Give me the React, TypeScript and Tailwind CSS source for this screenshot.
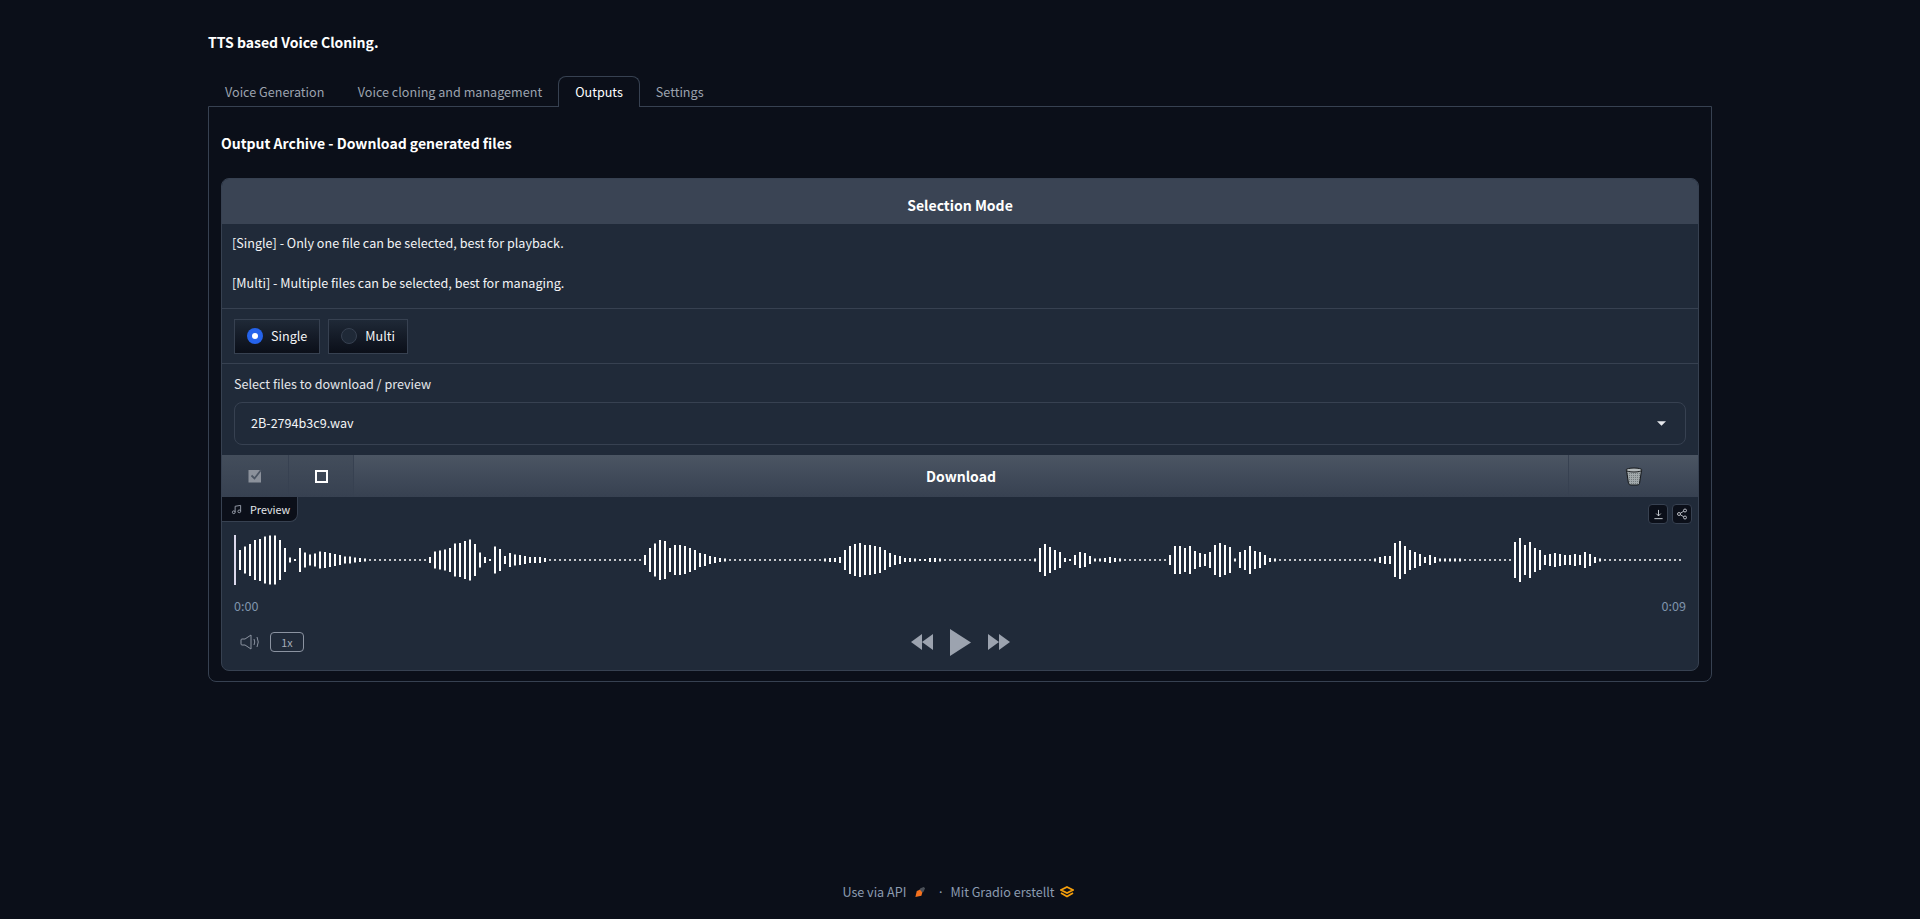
const dots = (n: number) => Array(n).fill(1.5)

// bar heights for the waveform, one bar every 5px
const bars = [
  20, 27, 32, 40, 42, 47, 49, 49, 40, 24, 5, 2, 24, 15, 11, 13, 17, 16, 14, 12, 10, 7, 7, 5, 4, 3,
  ...dots(12),
  6, 17, 19, 21, 24, 33, 34, 38, 41, 32, 15, 6, 2, 27, 22, 8, 14, 11, 10, 8, 6, 6, 6, 4,
  ...dots(19),
  10, 24, 33, 40, 38, 24, 30, 30, 28, 24, 20, 14, 12, 8, 6, 4, 3,
  ...dots(19),
  3, 4, 4, 6, 20, 28, 32, 34, 30, 30, 28, 26, 20, 14, 10, 8, 4, 4, 3, 2, 2, 4, 4, 3,
  ...dots(18),
  3, 24, 32, 26, 20, 16, 4, 2, 10, 16, 14, 8, 3, 3, 4, 6, 4, 3,
  ...dots(9),
  10, 28, 28, 24, 28, 18,
  14, 12, 16, 30, 34, 30, 26, 3, 16, 20, 28, 18, 16, 10, 4, 3,
  ...dots(19),
  3, 6, 8, 8, 34, 38, 28, 20, 16, 12, 6, 10, 6, 3, 3, 3, 3, 3,
  ...dots(10),
  36, 44, 30, 36, 24, 20, 10, 12, 14, 12, 10, 10, 12, 10, 16, 12, 6, 3,
  ...dots(16),
]

function Waveform() {
  return (
    <svg className="block" width="1452" height="56" viewBox="0 0 1452 56">
      <rect x="0" y="3" width="2" height="50" fill="#dcd9ec" />
      {bars.map((h, i) => (
        <rect key={i} x={5 + i * 5} y={28 - h / 2} width="2" height={h} fill="#ffffff" />
      ))}
    </svg>
  )
}

function Radio({ label, checked }: { label: string; checked?: boolean }) {
  return (
    <label className="flex h-[35px] items-center border border-[#374151] bg-gradient-to-b from-[#1f2937] to-[#0b0f19] pl-3 pr-[12px] text-[12.6px] text-[#f3f4f6]">
      {checked ? (
        <span className="flex h-4 w-4 items-center justify-center rounded-full bg-[#2563eb]">
          <span className="h-[6px] w-[6px] rounded-full bg-white" />
        </span>
      ) : (
        <span className="h-4 w-4 rounded-full border border-[#374151] bg-[#1f2937]" />
      )}
      <span className="ml-2">{label}</span>
    </label>
  )
}

function SmallIcon({ children }: { children: React.ReactNode }) {
  return (
    <button className="flex h-5 w-5 items-center justify-center rounded border border-[#374151] bg-[#0b0f19] text-[#d1d5db]">
      {children}
    </button>
  )
}

export default function App() {
  return (
    <div
      className="flex min-h-screen flex-col bg-[#0b0f19] text-[#f3f4f6]"
      style={{ fontFamily: '"Noto Sans CJK JP", "Open Sans", sans-serif' }}
    >
      <div className="mx-auto w-[1504px]">
        <h1 className="mt-[31px] h-[22px] text-[14px] font-semibold leading-[22px] text-white">TTS based Voice Cloning.</h1>

        {/* Tabs */}
        <div className="mt-[24px] flex h-[30px] items-end pl-[2px] text-[12.6px] text-[#9ca3af]">
          <button className="h-[30px] pl-[15px] pr-[17px]">Voice Generation</button>
          <button className="h-[30px] pl-[16.5px] pr-[16px]">Voice cloning and management</button>
          <button className="relative z-10 h-[31px] rounded-t-lg border border-b-0 border-[#374151] bg-[#0b0f19] px-[16px] text-white">Outputs</button>
          <button className="h-[30px] pl-[16px] pr-[15px]">Settings</button>
        </div>

        <div className="-mt-px h-[576px] rounded-b-lg border border-[#374151] px-3 pt-[13px]">
          <h2 className="mt-[11px] h-[24px] text-[14px] font-semibold leading-[24px] text-white">Output Archive - Download generated files</h2>

          <div className="mt-[23px] h-[493px] overflow-hidden rounded-lg border border-[#374151] bg-[#202a39]">
            <div className="flex h-[45px] items-center justify-center bg-[#3a4454] pt-[7px] text-[14px] font-semibold text-white">Selection Mode</div>

            <div className="h-[84px] px-[10px] pt-[9px] text-[12.6px] leading-[20px] text-[#f3f4f6]">
              <p>[Single] - Only one file can be selected, best for playback.</p>
              <p className="mt-[20px]">[Multi] - Multiple files can be selected, best for managing.</p>
            </div>

            <div className="flex h-[56px] items-center gap-2 border-y border-[#374151] px-3">
              <Radio label="Single" checked />
              <Radio label="Multi" />
            </div>

            <div className="h-[91px] px-3">
              <div className="h-[38px] pt-[10px] text-[12.6px] leading-[20px] text-[#e5e7eb]">Select files to download / preview</div>
              <div className="flex h-[43px] items-center justify-between rounded-lg border border-[#374151] pl-4 pr-[19px] text-[12.6px] text-[#f3f4f6]">
                <span>2B-2794b3c9.wav</span>
                <svg width="9" height="5" viewBox="0 0 10 5">
                  <path d="M0 0h10L5 5z" fill="#e5e7eb" />
                </svg>
              </div>
            </div>

            {/* Action buttons */}
            <div className="flex h-[42px] bg-gradient-to-b from-[#4b5563] to-[#374151]">
              <button className="flex w-[66px] items-center justify-center bg-gradient-to-b from-[#434d5b] to-[#374151]">
                <svg width="14" height="14" viewBox="0 0 14 14">
                  <rect x="0.5" y="1" width="12.5" height="12.5" fill="#8b919b" />
                  <path d="M3.5 6.5l3 3L13 1" fill="none" stroke="#4b5563" strokeWidth="1.8" />
                </svg>
              </button>
              <button className="flex w-[66px] items-center justify-center border-x border-[#374151] bg-gradient-to-b from-[#434d5b] to-[#374151]">
                <span className="h-[13px] w-[13px] border-2 border-white" />
              </button>
              <button className="flex-1 text-[14px] font-semibold text-white">Download</button>
              <button className="flex w-[130px] items-center justify-center border-l border-[#374151]">
                <svg width="18" height="19" viewBox="0 0 18 19">
                  <defs>
                    <pattern id="mesh" width="2" height="2" patternUnits="userSpaceOnUse">
                      <rect width="2" height="2" fill="#a2a9ab" />
                      <rect width="1" height="1" fill="#727a7d" />
                    </pattern>
                  </defs>
                  <path d="M1.500 3.500 3.500 16.500Q3.800 18 6 18h6q2.200 0 2.500-1.500l2-13z" fill="url(#mesh)" stroke="#15181b" strokeWidth="1" />
                  <ellipse cx="9" cy="3" rx="8" ry="2" fill="#b3b9bb" stroke="#15181b" strokeWidth="1" />
                </svg>
              </button>
            </div>

            {/* Audio player */}
            <div className="relative h-[173px]">
              <div className="absolute left-0 top-0 flex h-[25px] w-[76px] items-center rounded-br-lg border-b border-r border-[#374151] bg-[#0b0f19] pl-[9px] text-[10.8px] text-[#e5e7eb]">
                <svg className="text-[#9ca3af]" width="11" height="11" viewBox="0 0 24 24" fill="none" stroke="currentColor" strokeWidth="2">
                  <path d="M9 18V5l12-2v13" />
                  <circle cx="6" cy="18" r="3" />
                  <circle cx="18" cy="16" r="3" />
                </svg>
                <span className="ml-[8px]">Preview</span>
              </div>
              <div className="absolute right-[6px] top-[7px] flex gap-1">
                <SmallIcon>
                  <svg width="11" height="11" viewBox="0 0 12 12" fill="none" stroke="currentColor" strokeWidth="1">
                    <path d="M6 1v6.500M3.500 5 6 7.500 8.500 5M1.500 10.500h9" />
                  </svg>
                </SmallIcon>
                <SmallIcon>
                  <svg width="12" height="12" viewBox="0 0 24 24" fill="none" stroke="currentColor" strokeWidth="1.700">
                    <circle cx="18" cy="5" r="3" />
                    <circle cx="6" cy="12" r="3" />
                    <circle cx="18" cy="19" r="3" />
                    <path d="M8.600 13.500l6.800 4M15.400 6.500l-6.800 4" />
                  </svg>
                </SmallIcon>
              </div>

              <div className="px-3 pt-[35px]">
                <Waveform />
                <div className="mt-[9px] flex justify-between text-[12.6px] leading-[18px] text-[#7f93ab]">
                  <span>0:00</span>
                  <span>0:09</span>
                </div>

                <div className="relative mt-[13px] flex h-[28px] items-center justify-center gap-[17px]">
                  <div className="absolute left-[6px] flex items-center gap-[10px]">
                    <svg width="20" height="16" viewBox="0 0 20 16" fill="none" stroke="#8b93a1" strokeWidth="1">
                      <path d="M1 6a1 1 0 0 1 1-1h3l6-4v14l-6-4H2a1 1 0 0 1-1-1z" />
                      <path d="M14 5q1.500 3 0 6M17 3q2.500 5 0 10" />
                    </svg>
                    <span className="flex h-[20px] w-[34px] items-center justify-center rounded border border-[#8b93a1] text-[10.8px] text-[#a4adba]">1x</span>
                  </div>
                  <svg width="22" height="16" viewBox="0 0 22 16" fill="#9ca3af">
                    <path d="M0 8l11-8v16zM11 8l11-8v16z" />
                  </svg>
                  <svg width="21" height="27" viewBox="0 0 21 27" fill="#9ca3af">
                    <path d="M0 0l21 13.500L0 27z" />
                  </svg>
                  <svg width="22" height="16" viewBox="0 0 22 16" fill="#9ca3af">
                    <path d="M0 0l11 8-11 8zM11 0l11 8-11 8z" />
                  </svg>
                </div>
              </div>
            </div>
          </div>
        </div>
      </div>

      {/* Footer */}
      <footer className="mt-[200px] flex h-[20px] items-center justify-center pr-[4px] text-[12.6px] text-[#8b9bb0]">
        <span>Use via API</span>
        <svg className="ml-[8px]" width="12" height="12" viewBox="0 0 13 13">
          <path d="M7 2.500 10.500 1l1.500 1.500L10.500 6 6.500 9 4 6.500z" fill="#4b5058" />
          <path d="M6.500 4 3 5.500 1.500 12 8 10.500 9 7z" fill="#f4711e" />
        </svg>
        <span className="ml-[11px] mr-[6px]">·</span>
        <span>Mit Gradio erstellt</span>
        <svg className="ml-[5px]" width="14" height="12" viewBox="0 0 14 12" fill="none" stroke="#f59e0b" strokeWidth="1.800">
          <path d="M7 1l6 3-6 3-6-3z" />
          <path d="M1 7l6 3.500L13 7" />
        </svg>
      </footer>
    </div>
  )
}
